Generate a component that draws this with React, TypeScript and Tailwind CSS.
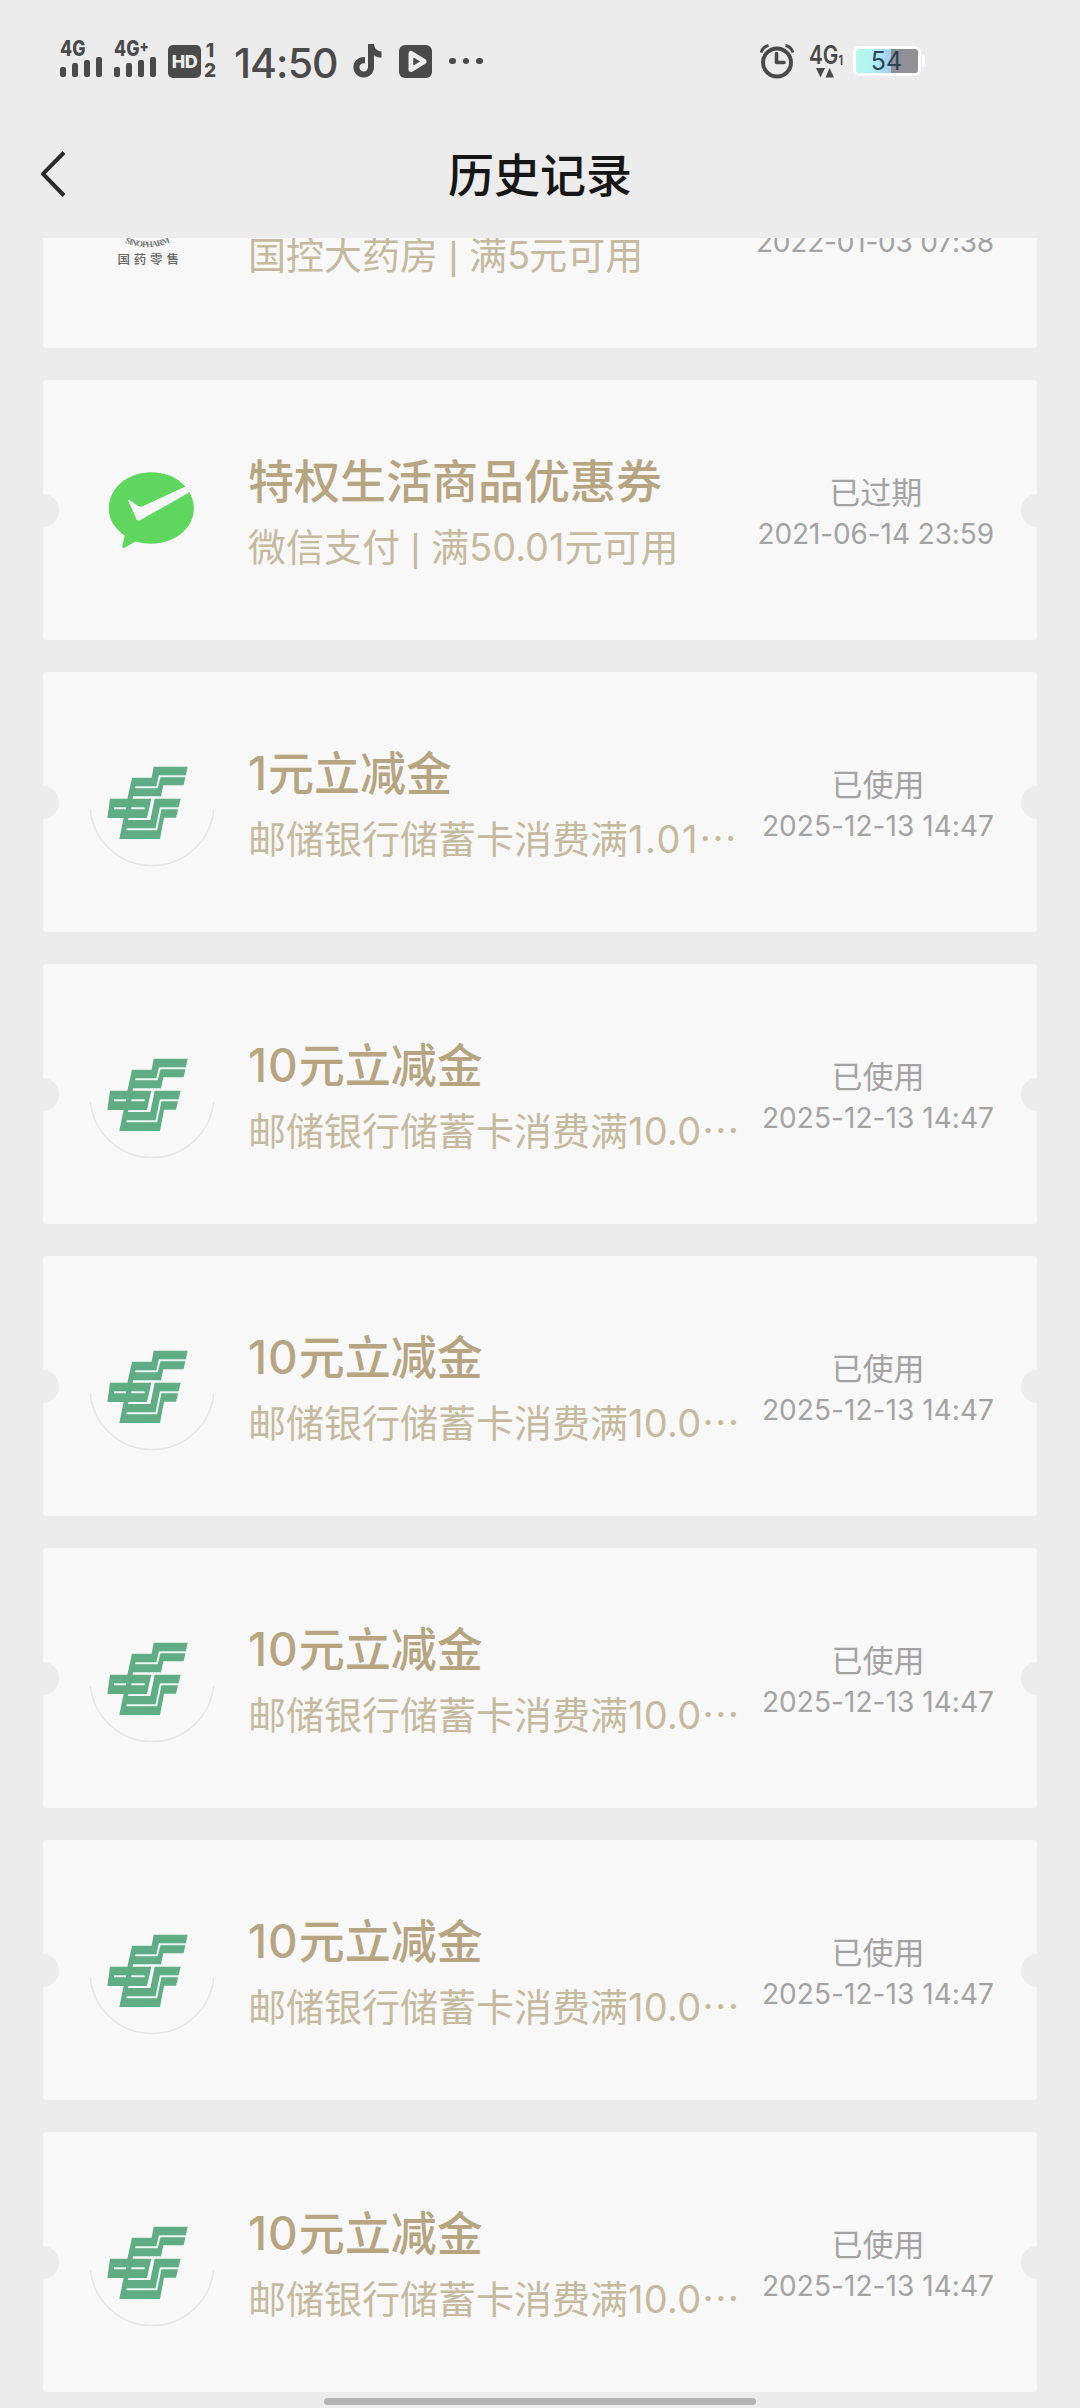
import React from "react";

type Kind = "pharmacy" | "wechat" | "psbc";
type Coupon = {
  kind: Kind;
  title?: string;
  desc: string;
  more?: boolean;
  status?: string;
  time: string;
  descTracking: string;
  timeTracking: string;
};

const ten: Coupon = {
  kind: "psbc",
  title: "10元立减金",
  desc: "邮储银行储蓄卡消费满10.0",
  more: true,
  status: "已使用",
  time: "2025-12-13 14:47",
  descTracking: "tracking-[0.3px]",
  timeTracking: "tracking-[0.06px]",
};

const coupons: Coupon[] = [
  {
    kind: "pharmacy",
    desc: "国控大药房 | 满5元可用",
    time: "2022-01-03 07:38",
    descTracking: "tracking-[-1px]",
    timeTracking: "tracking-[-0.2px]",
  },
  {
    kind: "wechat",
    title: "特权生活商品优惠券",
    desc: "微信支付 | 满50.01元可用",
    status: "已过期",
    time: "2021-06-14 23:59",
    descTracking: "tracking-normal",
    timeTracking: "tracking-[-0.1px]",
  },
  { ...ten, title: "1元立减金", desc: "邮储银行储蓄卡消费满1.01", descTracking: "tracking-[1.5px]" },
  ten,
  ten,
  ten,
  ten,
  ten,
];

function PharmacyLogo() {
  return (
    <svg className="size-[124px]" viewBox="90 156 124 124">
      <path id="arc" d="M123.500 242 Q147.500 252.500 171.500 241.500" fill="none" />
      <text fontSize="8.500" fontWeight="700" fill="#777" className="font-['Liberation_Serif']">
        <textPath href="#arc" startOffset="50%" textAnchor="middle" textLength="47">SINOPHARM</textPath>
      </text>
      <text x="117.500" y="263.500" fontSize="12.500" fontWeight="500" fill="#666" letterSpacing="3.800" className="font-['Noto_Sans_CJK_SC']">
        国药零售
      </text>
    </svg>
  );
}

function WechatPayLogo() {
  return (
    <svg className="size-[124px]" viewBox="90 448 124 124">
      <path
        d="M151.300 472.300C127.800 472.300 108.800 488 108.800 508.500C108.800 519.500 115 529 124.600 535.500L122.300 546.500Q122.300 549 124.800 547.600L135.500 541.400Q143 543.700 151.300 543.700C174.800 543.700 193.900 528 193.900 508.500C193.900 488 174.800 472.300 151.300 472.300Z"
        fill="#5fd75f"
      />
      <path d="M128.100 500.500Q128.800 499.300 130 500.300L138 506Q140.300 507.300 142.800 506.300L187 485.800L191 491.600L140 520.200Q137.600 521.300 136.500 519.200Z" fill="#f8f8f8" />
    </svg>
  );
}

function PsbcLogo() {
  return (
    <svg className="size-[124px] overflow-visible" viewBox="180 240 372 372">
      <path d="M181 450A186 186 0 0 0 551 450" fill="none" stroke="#e6e6e6" strokeWidth="4.500" />
      <g transform="translate(168 240)">
        <g fill="#5fac85">
          <path d="M203 80H305L293 136H232L225 169H141L140 177H124L138 113H197Z" />
          <path d="M72 176H196L183 234H64Z" />
          <path d="M206 176H284L270 233H234L222 297H100L113 233H128L126 240H193Z" />
        </g>
        <g fill="none" stroke="#eaf5ef" strokeWidth="6">
          <path d="M148 142H213L221 109H303" />
          <path d="M84 205H120M136 205H176" />
          <path d="M122 268H211L224 205H281" />
        </g>
      </g>
    </svg>
  );
}

const logos: Record<Kind, () => React.ReactElement> = { pharmacy: PharmacyLogo, wechat: WechatPayLogo, psbc: PsbcLogo };

/** Sets the numerals and the divider of a mixed line apart from its Chinese text. */
function Mixed({ text, tracking }: { text: string; tracking: string }) {
  return (
    <>
      {text.split(/([\d.]+| \| )/).map((part, i) => {
        if (part === " | ") return <span key={i} className="font-['Liberation_Sans'] leading-none whitespace-pre">{part}</span>;
        return /^[\d.]+$/.test(part) ? <span key={i} className={tracking}>{part}</span> : part;
      })}
    </>
  );
}

function Card({ c }: { c: Coupon }) {
  const Logo = logos[c.kind];
  return (
    <div className="relative flex h-[260px] shrink-0 items-center overflow-hidden rounded-[3px] bg-[#f8f8f8] pr-[43px] pl-[47px]">
      <div className="absolute top-[114px] -left-[17px] size-[33px] rounded-full bg-[#ececec]" />
      <div className="absolute top-[114px] -right-[17px] size-[33px] rounded-full bg-[#ececec]" />
      <Logo />
      <div className="ml-[34px] flex-1 pt-1 whitespace-nowrap">
        <div className="h-[66px] text-[46px] leading-[60px] font-medium text-[#b7a582]">
          {c.title && <Mixed text={c.title} tracking="tracking-[1px]" />}
        </div>
        <div className="h-[56px] text-[38px] leading-[61px] text-[#c6ba9e]">
          <Mixed text={c.desc} tracking={c.descTracking} />
          {c.more && <span className="font-['Noto_Sans_CJK_SC'] leading-none">…</span>}
        </div>
      </div>
      <div className="pt-1.5 text-center whitespace-nowrap text-[#a3a3a3]">
        <div className="h-[42px] text-[31px] leading-[42px]">{c.status}</div>
        <div className="text-[28px] leading-[40px]"><span className={c.timeTracking}>{c.time}</span></div>
      </div>
    </div>
  );
}

function Signal({ label }: { label: React.ReactNode }) {
  return (
    <div className="flex h-[36px] w-[42px] flex-col justify-between">
      <span className="h-[16px] origin-left scale-x-[0.84] text-[21px] leading-[16px] font-extrabold whitespace-nowrap">{label}</span>
      <div className="flex items-end justify-between">
        <i className="h-[10px] w-[6px] rounded-[2px] bg-[#4a4a4a]" />
        <i className="h-[14px] w-[6px] rounded-[2px] bg-[#4a4a4a]" />
        <i className="h-[17px] w-[6px] rounded-[2px] bg-[#4a4a4a]" />
        <i className="h-[20px] w-[6px] rounded-[2px] bg-[#4a4a4a]" />
      </div>
    </div>
  );
}

function StatusBar() {
  return (
    <div className="flex h-[122px] shrink-0 items-center pl-[60px] text-[#4a4a4a]">
      <div className="-mt-[5px]"><Signal label="4G" /></div>
      <div className="-mt-[5px] ml-[12px]"><Signal label={<>4G<sup className="-top-1 text-[16px]">+</sup></>} /></div>
      <div className="ml-[12px] flex size-[33px] items-center justify-center rounded-[5px] bg-[#4a4a4a]">
        <span className="text-[18px] font-extrabold tracking-[-0.5px] text-[#ececec]">HD</span>
      </div>
      <div className="ml-[3px] flex h-[34px] w-[12px] flex-col items-center justify-between text-[19px] font-extrabold">
        <span className="leading-[14px]">1</span>
        <span className="leading-[14px]">2</span>
      </div>
      <span className="mt-[4px] ml-[18px] w-[104px] text-[41px] leading-none font-medium tracking-[-0.9px] whitespace-nowrap">14:50</span>
      <svg className="ml-[15px] h-[34px] w-[29px]" viewBox="0 0 29 34">
        <path d="M15 0h6c.4 4.600 3 7 7.500 7.500v6c-3 0-5.400-.8-7.500-2.300V23c0 6-4.500 10.500-10.300 10.500S.4 29 .4 23.300C.4 17 5.500 12.500 12 13v6.300c-3.200-.7-5.600 1.200-5.600 3.900 0 2.500 1.900 4.300 4.300 4.300 2.600 0 4.300-1.900 4.300-4.800z" fill="currentColor" />
      </svg>
      <svg className="ml-[17px] size-[33px]" viewBox="0 0 33 33">
        <rect width="33" height="33" rx="6" fill="currentColor" />
        <path d="M12 8.500v16l13-8z" fill="none" stroke="#ececec" strokeWidth="5" strokeLinejoin="round" />
        <path d="M14.500 12.500v8l6.500-4z" fill="currentColor" />
      </svg>
      <div className="ml-[17px] flex gap-[7px]">
        <i className="size-[6.500px] rounded-full bg-[#4a4a4a]" />
        <i className="size-[6.500px] rounded-full bg-[#4a4a4a]" />
        <i className="size-[6.500px] rounded-full bg-[#4a4a4a]" />
      </div>
      <svg className="ml-[277px] h-[35px] w-[34px]" viewBox="0 0 34 35" fill="none" stroke="currentColor">
        <circle cx="17" cy="18.500" r="14" strokeWidth="4" />
        <path d="M16.500 9.500V18.500H24" strokeWidth="3.600" strokeLinejoin="round" strokeLinecap="round" />
        <path d="M1 8.500Q3 2.500 8.500 1.500M33 8.500Q31 2.500 25.500 1.500" strokeWidth="3" />
      </svg>
      <div className="ml-[15px] flex w-[34px] flex-col items-start">
        <div className="flex h-[22px] origin-left scale-x-[0.8] items-end text-[26px] leading-[22px] font-semibold">
          4G<span className="text-[13px] leading-[12px] font-bold">1</span>
        </div>
        <svg className="mt-[2px] ml-[7px] h-[10px] w-[18px]" viewBox="0 0 18 10" fill="currentColor">
          <path d="M0 0h9L4.500 9.500zM9.500 9.500h8.500L13.500 0z" />
        </svg>
      </div>
      <div className="ml-[10px] flex items-center">
        <div className="relative flex h-[30px] w-[68px] items-center justify-center rounded-[6px] border-[3px] border-white bg-[linear-gradient(90deg,#b9f7ee_0%,#b0f2f2_25%,#a3cdf0_56%,#929097_56%)]">
          <span className="text-[25px] leading-none text-[#2c4554]">54</span>
        </div>
        <i className="ml-px h-[12px] w-[3px] rounded-r-[2px] bg-white" />
      </div>
    </div>
  );
}

export default function App() {
  return (
    <div className="flex h-[2408px] w-[1080px] flex-col overflow-hidden bg-[#ececec] font-['Inter','Noto_Sans_CJK_SC',sans-serif]">
      <StatusBar />
      <div className="grid h-[116px] shrink-0 grid-cols-[1fr_auto_1fr] items-center pb-[10px]">
        <svg className="mb-[3px] ml-[40px] h-[48px] w-[27px]" viewBox="0 0 27 48" fill="none" stroke="#2b2b2b" strokeWidth="4">
          <path d="M24 2.500L3 23.800L24 45.500" strokeLinejoin="round" />
        </svg>
        <h1 className="text-[46px] leading-none font-medium text-[#161616]">历史记录</h1>
      </div>
      <div className="flex h-[2154px] shrink-0 flex-col overflow-hidden px-[43px]">
        <div className="-mt-[150px] flex flex-col gap-8">
          {coupons.map((c, i) => (
            <Card key={i} c={c} />
          ))}
        </div>
      </div>
      <div className="mx-auto mt-[6px] h-[7px] w-[432px] shrink-0 rounded-full bg-[#b4b4b4]" />
    </div>
  );
}
